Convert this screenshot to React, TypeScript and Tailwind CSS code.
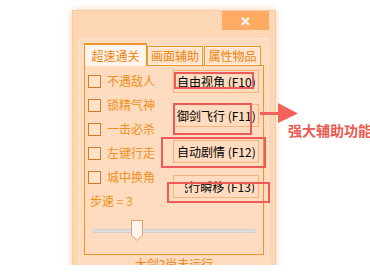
import React from "react";

const font = { fontFamily: '"Noto Sans CJK SC", "Noto Sans", sans-serif' };

const options = ["不遇敌人", "锁精气神", "一击必杀", "左键行走", "城中换角"];

function Checkbox({ label }: { label: string }) {
  return (
    <div className="flex items-center h-[24px]">
      <div className="w-[13px] h-[13px] border-[1.5px] border-[#cf7a2c] bg-[#ffe2c8]" />
      <span className="ml-[6px] text-[12px] leading-none text-[#f0901c]">{label}</span>
    </div>
  );
}

function HotkeyButton({ label, className }: { label: string; className?: string }) {
  return (
    <div
      className={
        "w-[86px] h-[23px] border border-[#f4b47c] bg-[#ffdcbf] flex items-center overflow-hidden text-[12px] leading-none text-black whitespace-nowrap " +
        (className ?? "")
      }
    >
      {label}
    </div>
  );
}

export default function App() {
  return (
    <div className="relative w-[370px] h-[275px] bg-white overflow-hidden" style={font}>
      {/* window, cut off at the bottom of the screenshot */}
      <div className="h-[265px] overflow-hidden pt-[10px] pl-[72px]">
        <div className="w-[204px] h-[300px] bg-[#fdd6b4] border border-[#f8c9a2] shadow-[0_0_7px_rgba(240,170,110,0.55)]">
          {/* title bar */}
          <div className="flex justify-end h-[19px] pr-[6px]">
            <div className="w-[47px] h-[19px] bg-[#ffab64] flex items-center justify-center text-white text-[13px] font-bold leading-none">
              ✕
            </div>
          </div>

          {/* inner panel */}
          <div className="mt-[8px] mx-[6px] border border-[#fde5d0] bg-[#ffdcbf] px-[4px] pt-[4px] h-[260px]">
            {/* tabs */}
            <div className="flex items-end h-[23px] text-[12px] leading-none">
              <div className="w-[63px] h-[23px] border border-[#f0952a] border-t-2 border-b-0 bg-[#fff5ec] text-[#ea8614] flex items-center justify-center relative z-10">
                超速通关
              </div>
              <div className="w-[56px] h-[20px] border border-[#f0952a] bg-[#ffe3cb] text-[#ea8614] flex items-center justify-center shadow-[inset_0_0_0_1px_#fff0e2]">
                画面辅助
              </div>
              <div className="ml-[1px] w-[57px] h-[20px] border border-[#f0952a] bg-[#ffe3cb] text-[#ea8614] flex items-center justify-center shadow-[inset_0_0_0_1px_#fff0e2]">
                属性物品
              </div>
            </div>

            {/* tab content */}
            <div className="-mt-[1px] w-[180px] h-[190px] border border-[#f0952a] bg-[#ffdcbf] flex flex-col">
              <div className="flex justify-between pr-[4px]">
                <div className="flex flex-col pl-[3px] pt-[3px]">
                  {options.map((o) => (
                    <Checkbox key={o} label={o} />
                  ))}
                  <div className="flex items-center h-[24px] pl-[2px] text-[12px] leading-none text-[#f0901c]">
                    步速 = 3
                  </div>
                </div>
                <div className="flex flex-col pt-[4px]">
                  <HotkeyButton label="自由视角 (F10)" className="pl-[3px]" />
                  <HotkeyButton label="御剑飞行 (F11)" className="mt-[11px] pl-[3px]" />
                  <HotkeyButton label="自动剧情 (F12)" className="mt-[13px] pl-[3px]" />
                  <div className="mt-[12px] w-[86px] h-[23px] border border-[#f4b47c] bg-[#ffdcbf] flex items-center pl-[11px] pr-[3px]">
                    <div className="flex-1 overflow-hidden flex justify-end text-[12px] leading-none text-black whitespace-nowrap">
                      <span className="shrink-0">飞行瞬移 (F13)</span>
                    </div>
                  </div>
                </div>
              </div>

              {/* slider */}
              <div className="relative mt-[7px] ml-[8px] w-[162px] h-[21px] flex items-center">
                <div className="w-full h-[4px] bg-[#dedede] border border-[#cfcfcf]" />
                <svg className="absolute left-[38px] top-0" width="12" height="21" viewBox="0 0 12 21">
                  <path d="M0.5 0.5 H11.5 V15 L6 20.5 L0.5 15 Z" fill="#fff4ec" stroke="#e0a070" />
                </svg>
              </div>
            </div>

            <div className="mt-[1px] text-center text-[12px] leading-[16px] text-[#ea8614]">大剑2尚未运行</div>
          </div>
        </div>
      </div>

      {/* red annotation boxes */}
      <div className="absolute left-[174px] top-[72px] w-[80px] h-[17px] border-2 border-[#ee5a55]" />
      <div className="absolute left-[173px] top-[103px] w-[79px] h-[32px] border-2 border-[#ee5a55]" />
      <div className="absolute left-[161px] top-[137px] w-[105px] h-[31px] border-2 border-[#ee5a55]" />
      <div className="absolute left-[167px] top-[182px] w-[103px] h-[21px] border-2 border-[#ee5a55]" />

      {/* arrow + caption */}
      <svg className="absolute left-[260px] top-[102px]" width="40" height="22" viewBox="0 0 40 22">
        <rect x="0" y="10" width="20" height="3" fill="#f2625a" />
        <path d="M18 1 L38 11.5 L18 21 Z" fill="#f2625a" />
      </svg>
      <div className="absolute left-[288px] top-[122px] whitespace-nowrap text-[14px] font-bold leading-[16px] text-[#ea5a50]">
        强大辅助功能
      </div>
    </div>
  );
}
